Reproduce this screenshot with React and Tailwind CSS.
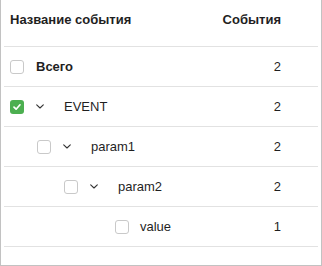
const rows = [
  { label: 'Всего', count: 2, bold: true, pad: 'pl-[6px]', expandable: false, checked: false },
  { label: 'EVENT', count: 2, pad: 'pl-[6px]', expandable: true, checked: true },
  { label: 'param1', count: 2, pad: 'pl-[33px]', expandable: true, checked: false },
  { label: 'param2', count: 2, pad: 'pl-[60px]', expandable: true, checked: false },
  { label: 'value', count: 1, pad: 'pl-[111px]', expandable: false, checked: false },
];

const Checkbox = ({ checked }) =>
  checked ? (
    <span className="flex h-[14px] w-[14px] shrink-0 items-center justify-center rounded-[3px] bg-[#4caf50]">
      <svg width="10" height="10" viewBox="0 0 10 10" fill="none">
        <path d="M2 5.2 L4.1 7.2 L8 2.8" stroke="white" strokeWidth="1.7" strokeLinecap="round" strokeLinejoin="round" />
      </svg>
    </span>
  ) : (
    <span className="h-[14px] w-[14px] shrink-0 rounded-[3px] border border-[#c9c9c9] bg-white" />
  );

const Chevron = () => (
  <span className="ml-[8px] flex w-[16px] shrink-0 items-center justify-center">
    <svg width="8" height="5" viewBox="0 0 8 5" fill="none">
      <path d="M0.7 0.8 L4 4 L7.3 0.8" stroke="#333" strokeWidth="1.1" strokeLinecap="round" strokeLinejoin="round" />
    </svg>
  </span>
);

export default function App() {
  return (
    <div className="h-[266px] w-[322px] border-x border-b border-[#c2c2c2] bg-white px-[3px] font-['Liberation_Sans',Arial,sans-serif] text-[13px] text-[#1f1f1f]">
      {/* header */}
      <div className="flex h-[47px] items-start border-b border-[#e2e2e2] pt-[12px] leading-[16px] font-bold">
        <div className="flex-1 pl-[6px]">Название события</div>
        <div className="pr-[37px] text-right">События</div>
      </div>

      {rows.map((r) => (
        <div key={r.label} className="flex h-[40px] items-center border-b border-[#e2e2e2]">
          <div className={`flex flex-1 items-center ${r.pad}`}>
            <Checkbox checked={r.checked} />
            {r.expandable ? (
              <>
                <Chevron />
                <span className="ml-[16px]">{r.label}</span>
              </>
            ) : (
              <span className={r.bold ? 'ml-[12px] font-bold' : 'ml-[11px]'}>{r.label}</span>
            )}
          </div>
          <div className="pr-[37px] text-right">{r.count}</div>
        </div>
      ))}
    </div>
  );
}
